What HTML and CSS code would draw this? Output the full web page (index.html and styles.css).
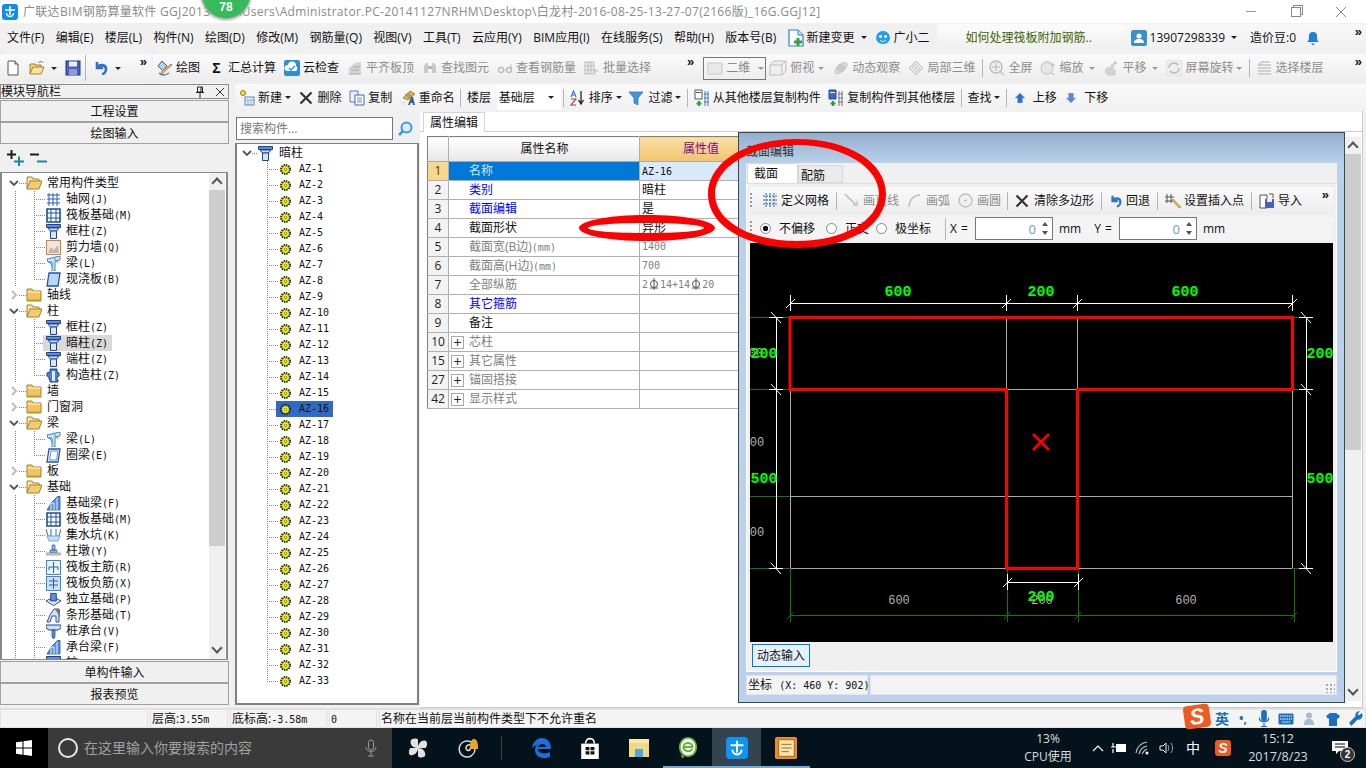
FILE: index.html
```html
<!DOCTYPE html>
<html lang="zh-CN">
<head>
<meta charset="utf-8">
<title>广联达BIM钢筋算量软件</title>
<link rel="stylesheet" href="styles.css">
</head>
<body>
<svg class="defs" width="0" height="0" aria-hidden="true">
  <symbol id="i-app" viewBox="0 0 16 16"><rect width="16" height="16" rx="3" fill="#0e8ef0"/><path d="M8 2v9M3 6h10M4.500 9a3.500 3.500 0 0 0 7 0" fill="none" stroke="#fff" stroke-width="1.500"/></symbol>
  <symbol id="i-new" viewBox="0 0 16 16"><path d="M3 1h7l3 3v11H3z" fill="#fff" stroke="#555"/><path d="M10 1v3h3" fill="#ddd" stroke="#555"/></symbol>
  <symbol id="i-open" viewBox="0 0 16 16"><path d="M1 14V4h5l1 1h5v2" fill="#f3d27a" stroke="#a8802c"/><path d="M1 14l3-7h11l-3 7z" fill="#fbe3a0" stroke="#a8802c"/><path d="M9 3c2-2 4-2 5 0" fill="none" stroke="#3a6fb0"/></symbol>
  <symbol id="i-save" viewBox="0 0 16 16"><rect x="1" y="1" width="14" height="14" fill="#4a62b8" stroke="#23357c"/><rect x="4" y="1.500" width="8" height="5" fill="#e8eefa"/><rect x="4" y="9" width="8" height="6" fill="#8b9bd6"/></symbol>
  <symbol id="i-undo" viewBox="0 0 16 16"><path d="M4 2v6h6M4 8c2-4 9-4 9 1 0 3-2 5-4 5" fill="none" stroke="#2a73d0" stroke-width="2.600"/></symbol>
  <symbol id="i-draw" viewBox="0 0 16 16"><path d="M1 6l4-5 5 5-4 5z" fill="#b6cdec" stroke="#35609c"/><path d="M5 14L15 5l-1-1L4 12z" fill="#e9c55a" stroke="#8a6d20" stroke-width=".7"/><path d="M2 13c3 3 7 2 10 0" fill="none" stroke="#4a7fc4" stroke-width="1.300"/></symbol>
  <symbol id="i-cloud" viewBox="0 0 16 16"><rect width="16" height="16" rx="2" fill="#2b8fdc"/><path d="M3 11a3 3 0 0 1 1-6 4 4 0 0 1 8 1 3 3 0 0 1 0 5z" fill="#fff"/><path d="M5 8l2 2 4-4" fill="none" stroke="#2b8fdc" stroke-width="1.300"/></symbol>
  <symbol id="i-gbox" viewBox="0 0 16 16"><path d="M2 14V8l6-5 6-1v12z" fill="#d4d4d4"/><path d="M2 14h12M4 10h8M6 7h7" stroke="#aaa" fill="none"/></symbol>
  <symbol id="i-gfind" viewBox="0 0 16 16"><path d="M2 13V6l2-3h2v10zM10 13V3h2l2 3v7z" fill="#c8c8c8"/><path d="M6 6h4v3H6z" fill="#b5b5b5"/></symbol>
  <symbol id="i-gglass" viewBox="0 0 16 16"><circle cx="4" cy="10" r="2.500" fill="none" stroke="#bbb" stroke-width="1.300"/><circle cx="12" cy="10" r="2.500" fill="none" stroke="#bbb" stroke-width="1.300"/><path d="M6 10h4M14 10V4" stroke="#bbb"/></symbol>
  <symbol id="i-gselect" viewBox="0 0 16 16"><path d="M1 2h9v12H1zM4 2v12M7 2v12M1 6h9M1 10h9" fill="#eee" stroke="#bbb"/><path d="M9 8l6 3-3 1-1 3z" fill="#ccc"/></symbol>
  <symbol id="i-g2d" viewBox="0 0 16 16"><rect x="1" y="3" width="14" height="11" fill="#e8e8e8" stroke="#c8c8c8"/></symbol>
  <symbol id="i-gcube" viewBox="0 0 18 16"><path d="M1 5h12v10H1zM1 5l4-4h12l-4 4M13 15l4-4V1" fill="#eee" stroke="#bdbdbd"/></symbol>
  <symbol id="i-gorbit" viewBox="0 0 16 16"><ellipse cx="8" cy="8" rx="7.500" ry="3.500" transform="rotate(-40 8 8)" fill="#ddd" stroke="#c4c4c4"/><circle cx="8" cy="8" r="4" fill="#c8c8c8"/></symbol>
  <symbol id="i-g3d" viewBox="0 0 16 16"><path d="M1 8l7-7 7 7-7 7z" fill="#e4e4e4" stroke="#c4c4c4"/><path d="M4 8l4-4M6 10l4-4M8 12l4-4" stroke="#c4c4c4"/></symbol>
  <symbol id="i-gfull" viewBox="0 0 16 16"><circle cx="7" cy="7" r="6" fill="#eee" stroke="#bbb" stroke-width="1.300"/><path d="M7 3v8M3 7h8M11 11l4 4" stroke="#bbb" stroke-width="1.200"/></symbol>
  <symbol id="i-gzoom" viewBox="0 0 16 16"><circle cx="7" cy="8" r="6" fill="#e6e6e6" stroke="#ccc" stroke-width="1.300"/><path d="M13 3v4M11 5h4M11 13l4 2" stroke="#bbb"/></symbol>
  <symbol id="i-gpan" viewBox="0 0 16 16"><path d="M2 11c0-3 4-5 6-4V4h3v5l2 1v3c0 2-2 3-5 3s-6-2-6-5z" fill="#d2d2d2"/><path d="M12 1v4M10 3h4" stroke="#bbb"/></symbol>
  <symbol id="i-grot" viewBox="0 0 16 16"><rect width="16" height="16" fill="#eee" stroke="#ddd"/><path d="M3 8a5 5 0 0 1 9-3M13 8a5 5 0 0 1-9 3" fill="none" stroke="#bbb" stroke-width="1.500"/></symbol>
  <symbol id="i-gfloor" viewBox="0 0 16 16"><path d="M2 5h13M2 8h13M2 11h13M2 14h13M2 5l4-3h8" fill="none" stroke="#c4c4c4" stroke-width="1.300"/></symbol>
  <symbol id="i-newc" viewBox="0 0 16 16"><rect x="6" y="7" width="9" height="8" fill="#e8f0fa" stroke="#5b87c0"/><path d="M6 10h9M9 10v5M12 10v5" stroke="#5b87c0" stroke-width=".6"/><path d="M4 0v3M1 3h6v0M4 6V3" stroke="#a08a10" stroke-width="3"/><path d="M4 1v4M2 3h4" stroke="#f5e05a" stroke-width="1.500"/></symbol>
  <symbol id="i-x" viewBox="0 0 14 14"><path d="M1.500 1.500l11 11M12.500 1.500l-11 11" stroke="#333" stroke-width="2.200" fill="none"/></symbol>
  <symbol id="i-copy" viewBox="0 0 16 16"><path d="M1 1h8v11H1z" fill="#eaf1fb" stroke="#5b7fb5"/><path d="M6 5h9v10H6z" fill="#fff" stroke="#3c68a8"/><path d="M8 8h5M8 10h5M8 12h5" stroke="#6a8fc4"/></symbol>
  <symbol id="i-rename" viewBox="0 0 16 16"><path d="M3 8l7-7 5 3-7 6z" fill="#d9b24a" stroke="#8c6e1e" stroke-width=".7"/><path d="M5 4l5 4M7 3l5 4" stroke="#556" stroke-width=".6"/><path d="M8 15l3-8h2l2 8h-2l-.4-2h-2l-.6 2z" fill="#2e5fb0"/><path d="M1 11h5v4H1z" fill="#e8e8e8"/></symbol>
  <symbol id="i-sort" viewBox="0 0 16 16"><path d="M1 7l2.500-6L6 7M2 5h3" fill="none" stroke="#3b6fc0" stroke-width="1.100"/><path d="M1 9h5L1 15h5" fill="none" stroke="#a83a3a" stroke-width="1.100"/><path d="M11 1v12M8.500 10l2.500 4 2.500-4" fill="none" stroke="#222" stroke-width="1.300"/></symbol>
  <symbol id="i-filter" viewBox="0 0 14 14"><path d="M0 1h14L9 7v7l-4-2V7z" fill="#3f97e0" stroke="#2a6eb0" stroke-width=".7"/></symbol>
  <symbol id="i-cf" viewBox="0 0 16 18"><path d="M1 1h7v9H1z" fill="#fff" stroke="#555"/><path d="M2 3h5v1H2z" fill="#2e5fb0"/><path d="M11 2v15M14 2v15M10 5h5M10 9h5M10 13h5" stroke="#3a7fc4"/><path d="M4 11h3v3h3v-1" fill="none"/><path d="M5 12v5M2.500 14.500h5" stroke="#27a03c" stroke-width="2.200"/></symbol>
  <symbol id="i-ct" viewBox="0 0 16 18"><path d="M1 1h7v9H1z" fill="#3a66c8" stroke="#2a4a9a"/><path d="M2 3h5v1H2z" fill="#fff"/><path d="M11 2v15M14 2v15M10 5h5M10 9h5M10 13h5" stroke="#777"/><path d="M5 12v5M2.500 14.500h5" stroke="#27a03c" stroke-width="2.200"/></symbol>
  <symbol id="i-up" viewBox="0 0 10 10"><path d="M5 0l5 5H7.500v5h-5V5H0z" fill="#2b6fd6" stroke="#8ab4ee" stroke-width=".5"/></symbol>
  <symbol id="i-dn" viewBox="0 0 10 10"><path d="M5 10l5-5H7.500V0h-5v5H0z" fill="#5a86dc" stroke="#9db9ee" stroke-width=".5"/></symbol>
  <symbol id="i-change" viewBox="0 0 16 18"><path d="M1 1h9l5 5v11H1z" fill="#fff" stroke="#2a7fd0" stroke-width="1.200"/><path d="M10 1v5h5" fill="#cfe4fa" stroke="#2a7fd0"/><path d="M10 9v8M6 13h8" stroke="#35a143" stroke-width="3"/></symbol>
  <symbol id="i-face" viewBox="0 0 16 16"><path d="M1 8a7 7 0 1 1 14 0c0 3-3 6-7 6s-7-3-7-6z" fill="#1ea0ec"/><circle cx="5.500" cy="6.500" r="1.400" fill="#fff"/><circle cx="10.500" cy="6.500" r="1.400" fill="#fff"/><path d="M5 10c2 2 4 2 6 0" fill="none" stroke="#fff"/></symbol>
  <symbol id="i-user" viewBox="0 0 16 16"><rect width="16" height="16" rx="2.500" fill="#3d8fc9"/><circle cx="8" cy="6" r="2.500" fill="#fff"/><path d="M3 13c0-3 2-4 5-4s5 1 5 4z" fill="#fff"/></symbol>
  <symbol id="i-bell" viewBox="0 0 14 16"><path d="M1 12c2-1 2-3 2-6a4 4 0 0 1 8 0c0 3 0 5 2 6z" fill="#1e7fe0"/><path d="M5 13.500h4L7 15.500z" fill="#1e7fe0"/></symbol>
  <symbol id="i-pin" viewBox="0 0 10 12"><path d="M2.500 1h5v5h-5zM1 6.500h8M5 7v5M6 1v5" fill="none" stroke="#222"/></symbol>
  <symbol id="i-close" viewBox="0 0 10 10"><path d="M1 1l8 8M9 1l-8 8" stroke="#333" fill="none"/></symbol>
  <symbol id="i-search" viewBox="0 0 16 16"><circle cx="9.500" cy="6.500" r="5" fill="#d9ecfb" stroke="#3d9ae0" stroke-width="2"/><path d="M6 10l-4 4" stroke="#3d9ae0" stroke-width="2.500"/></symbol>
  <symbol id="i-expand" viewBox="0 0 17 16"><path d="M0 4.500h9M4.500 0v9" stroke="#1b1b1b" stroke-width="2"/><path d="M7 11.500h10M12 6.500v9.500" stroke="#178a9a" stroke-width="2"/></symbol>
  <symbol id="i-collapse" viewBox="0 0 17 16"><path d="M0 4.500h9" stroke="#1b1b1b" stroke-width="2"/><path d="M7 11.500h10" stroke="#178a9a" stroke-width="2"/></symbol>
  <symbol id="i-down" viewBox="0 0 10 10"><path d="M1 3l4 4 4-4" fill="none" stroke="#555" stroke-width="1.800"/></symbol>
  <symbol id="i-right" viewBox="0 0 10 10"><path d="M3 1l4 4-4 4" fill="none" stroke="#bbb" stroke-width="1.800"/></symbol>
  <symbol id="i-fopen" viewBox="0 0 16 14"><path d="M1 13V1h5l1 2h6v2" fill="#f6e3a8" stroke="#9c8142"/><path d="M1 13l3-8h12l-3 8z" fill="#f5cd67" stroke="#9c8142"/></symbol>
  <symbol id="i-fclosed" viewBox="0 0 16 14"><path d="M1 13V1h5l1 2h8v10z" fill="#f2c65a" stroke="#9c8142"/><path d="M1.500 4h13" stroke="#fff3c8"/><path d="M2 12h12" stroke="#c48f22"/></symbol>
  <symbol id="i-grid" viewBox="0 0 15 15"><path d="M3 1v13M7 1v13M11 1v13M1 3h13M1 7h13M1 11h13" fill="none" stroke="#2a5cb8"/></symbol>
  <symbol id="i-raft" viewBox="0 0 15 15"><path d="M1 1h13v13H1z" fill="#fff" stroke="#1b4f9c" stroke-width="1.600"/><path d="M5 1v13M10 1v13M1 5h13M1 10h13" stroke="#1b4f9c"/></symbol>
  <symbol id="i-col" viewBox="0 0 15 15"><path d="M.5 .5h14v3H.5z" fill="#5b8fd8" stroke="#1c4290"/><path d="M2 4l2.500 3h6L13 4z" fill="#d4e3f8" stroke="#1c4290"/><path d="M4.500 7h6v7.500h-6z" fill="#d5e6fb" stroke="#1c4290"/></symbol>
  <symbol id="i-wall" viewBox="0 0 15 15"><rect x=".5" y=".5" width="14" height="14" fill="#f7e6d8" stroke="#d0803c"/><path d="M2 13l3-6 3 3 4-5 1 8z" fill="#b8b8b8"/></symbol>
  <symbol id="i-beam" viewBox="0 0 15 15"><path d="M1 3l13-3v4L9 5v10H6V6H2z" fill="#cfe4fa" stroke="#3f86d0"/><path d="M3 5l4 6M8 2l4 5" stroke="#3f86d0"/></symbol>
  <symbol id="i-slab" viewBox="0 0 15 15"><path d="M3 1h11l-2 13H1z" fill="#bcd7f5" stroke="#1e55a8" stroke-width="1.300"/></symbol>
  <symbol id="i-ring" viewBox="0 0 15 15"><path d="M3 1h11l-2 13H1z" fill="#fff" stroke="#1e55a8" stroke-width="1.300"/><path d="M5 3h7l-1.500 9H3.500z" fill="none" stroke="#5b8fd8"/></symbol>
  <symbol id="i-gz" viewBox="0 0 15 15"><path d="M4 1h7v3l2 1v3l-2 1v2l1 1v2H4v-2l-1-1V9L1 8V5l3-1z" fill="#4a80cc" stroke="#1c4290"/><path d="M6 3h3v10H6z" fill="#e0ebfa"/></symbol>
  <symbol id="i-fb" viewBox="0 0 15 15"><path d="M1 14l5-8 6-6h2v14z" fill="#5b8fd8" stroke="#1c4290" stroke-width=".7"/><path d="M5 14V7h3v7M11 14V2" stroke="#e0ebfa" fill="none"/></symbol>
  <symbol id="i-pit" viewBox="0 0 15 15"><path d="M0 1l2 7 3 0V1M10 1v7h3l2-7" fill="none" stroke="#2e6ab8"/><path d="M1 8h13l-2 5H3z" fill="#c6dcf4" stroke="#7aa8dc"/></symbol>
  <symbol id="i-dun" viewBox="0 0 15 15"><path d="M6 1h3v5H6zM4 6h7v3H4z" fill="#8fb4e4" stroke="#2e5fa8" stroke-width=".7"/><path d="M0 9h15v2H0z" fill="#d8d8d8" stroke="#888" stroke-width=".7"/></symbol>
  <symbol id="i-mj" viewBox="0 0 15 15"><rect x=".5" y=".5" width="14" height="14" fill="#e8f2fc" stroke="#3f86d0"/><path d="M7.500 2v11M3 7h9M3 7v3M12 7v3" fill="none" stroke="#2a5cb8"/></symbol>
  <symbol id="i-nj" viewBox="0 0 15 15"><rect x=".5" y=".5" width="14" height="14" fill="#cfe1f5" stroke="#3f86d0"/><path d="M7.500 2v11M3 5h9M3 9h9" fill="none" stroke="#2a5cb8"/></symbol>
  <symbol id="i-dl" viewBox="0 0 16 15"><path d="M0 9l8-4 8 4-8 5z" fill="#e0ebfa" stroke="#1c4290"/><path d="M5 1h6v8H5z" fill="#5b8fd8" stroke="#1c4290"/></symbol>
  <symbol id="i-tx" viewBox="0 0 15 15"><path d="M1 14l3-7 4-6h5v13h-3V8H6l-2 6z" fill="#cfe1f5" stroke="#1c4290" stroke-width=".9"/><path d="M9 1h5v8" fill="#777"/></symbol>
  <symbol id="i-zc" viewBox="0 0 15 15"><path d="M0 1h15v3l-3 2H3L0 4z" fill="#cfe1f5" stroke="#1c4290"/><path d="M6 6h3v7l-1.500 2L6 13z" fill="#5b8fd8" stroke="#1c4290" stroke-width=".7"/></symbol>
  <symbol id="i-gear" viewBox="0 0 12 12"><circle cx="6" cy="6" r="5" fill="none" stroke="#111" stroke-width="2" stroke-dasharray="1.500 1.100"/><circle cx="6" cy="6" r="4.300" fill="#f5ef00" stroke="#222" stroke-width=".6"/><circle cx="6" cy="6" r="1.400" fill="#fff" stroke="#333" stroke-width=".6"/></symbol>
  <symbol id="i-bar" viewBox="0 0 10 12"><circle cx="5" cy="6" r="3.500" fill="none" stroke="#555"/><path d="M5 0v12M1 10h8" stroke="#555"/></symbol>
  <symbol id="i-gridb" viewBox="0 0 15 15"><path d="M3 0v15M7 0v15M11 0v15M0 3h15M0 7h15M0 11h15" fill="none" stroke="#2a5cb8" stroke-dasharray="2 1"/></symbol>
  <symbol id="i-gline" viewBox="0 0 15 15"><path d="M1 1l11 11" stroke="#bbb" stroke-width="1.500"/><path d="M8 13h6V7z" fill="#ccc"/></symbol>
  <symbol id="i-garc" viewBox="0 0 15 15"><path d="M2 14C2 7 7 2 13 2" fill="none" stroke="#c0c0c0" stroke-width="1.500"/></symbol>
  <symbol id="i-gcirc" viewBox="0 0 15 15"><circle cx="7.500" cy="7.500" r="6.500" fill="#f0f0f0" stroke="#bbb" stroke-width="1.300"/><circle cx="7.500" cy="7.500" r="1" fill="#aaa"/></symbol>
  <symbol id="i-ins" viewBox="0 0 16 16"><path d="M2 1v9M6 1v9M0 4h9M0 8h9" fill="none" stroke="#555"/><path d="M7 7l7 8 2-1-8-8z" fill="#e8c84a" stroke="#8a6d20" stroke-width=".6"/></symbol>
  <symbol id="i-imp" viewBox="0 0 16 16"><path d="M1 2h7v13H1z" fill="#fff" stroke="#555"/><rect x="6" y="6" width="9" height="9" fill="#4a62b8"/><rect x="8" y="6" width="5" height="3" fill="#e8eefa"/><path d="M10 1h4v4" fill="none" stroke="#555"/></symbol>
  <symbol id="i-win" viewBox="0 0 16 16"><path d="M0 2.300l6.500-.9v6.200H0zM7.500 1.300L16 0v7.600H7.500zM0 8.500h6.500v6.200L0 13.800zM7.500 8.500H16V16l-8.500-1.200z" fill="#fff"/></symbol>
  <symbol id="i-mic" viewBox="0 0 12 18"><rect x="3.500" y="1" width="5" height="10" rx="2.500" fill="none" stroke="currentColor"/><path d="M1 8c0 6 10 6 10 0M6 13v4M3 17h6" fill="none" stroke="currentColor"/></symbol>
  <symbol id="i-micf" viewBox="0 0 12 18"><rect x="3" y="0" width="6" height="12" rx="3" fill="#1a6fc0"/><path d="M1 8c0 6 10 6 10 0M6 14v3M3 17.500h6" fill="none" stroke="#1a6fc0" stroke-width="1.300"/></symbol>
  <symbol id="i-pinw" viewBox="0 0 22 24"><path d="M11 12C6 12 2 9 3 4c1-3 7-3 8-1zM11 12c0-5 4-9 8-8 3 1 2 7 0 8zM11 12c5 0 8 3 8 8-1 3-7 3-8 1zM11 12c0 5-4 8-8 8-3-1-2-7 0-8z" fill="#e2e2e2"/></symbol>
  <symbol id="i-swirl" viewBox="0 0 22 22"><path d="M15 5a8 8 0 1 0 4 8c0-4-4-6-7-5-2 1-3 4-1 5 2 1 3 0 3-1" fill="none" stroke="#ddd" stroke-width="1.500"/><path d="M14 10c0-6 2-8 4-8s4 2 4 8l1 2h-10z" fill="#e8a818"/></symbol>
  <symbol id="i-edge" viewBox="0 0 22 22"><path d="M2 11C3 4 8 1 12 1c6 0 9 5 9 11H8c0 4 6 6 12 3v5c-7 3-15 0-15-7 0-3 1-5 3-6-2 1-5 3-6 4zm6-1h8c0-4-7-4-8 0z" fill="#1a6fdc"/></symbol>
  <symbol id="i-store" viewBox="0 0 18 20"><path d="M1 6h16v14H1z" fill="#fff"/><path d="M5 6c0-6 8-6 8 0" fill="none" stroke="#fff" stroke-width="1.500"/><path d="M5 9h3.500v3H5zM9.500 9H13v3H9.500zM5 13h3.500v3H5zM9.500 13H13v3H9.500z" fill="#111"/></symbol>
  <symbol id="i-folder" viewBox="0 0 22 20"><path d="M1 1h20v18H1z" fill="#f4d780"/><path d="M1 1h20v4H1z" fill="#f9e9b0"/><path d="M7 11h8v8H7z" fill="#4aa8dc"/></symbol>
  <symbol id="i-ie" viewBox="0 0 20 24"><ellipse cx="10" cy="11" rx="9" ry="10" fill="#fff" stroke="#63b53c" stroke-width="2"/><path d="M5 11h10c0-6-10-6-10 0 0 5 7 6 10 2" fill="none" stroke="#63b53c" stroke-width="2.200"/><path d="M3 20l2 3" stroke="#63b53c" stroke-width="2"/></symbol>
  <symbol id="i-task" viewBox="0 0 24 24"><rect width="24" height="24" rx="4" fill="#0e95f4"/><path d="M12 4v13M5 9h14M7 14a5 5 0 0 0 10 0" fill="none" stroke="#fff" stroke-width="2.200"/></symbol>
  <symbol id="i-note" viewBox="0 0 24 24"><rect width="24" height="24" rx="2" fill="#eb8f1c"/><rect x="4" y="3" width="17" height="18" fill="#fbe6b6" stroke="#a85c10"/><path d="M7 8h11M7 12h11M7 16h8" stroke="#a85c10"/></symbol>
  <symbol id="i-batt" viewBox="0 0 16 12"><rect x="5" y="2" width="10" height="8" fill="#fff"/><path d="M0 5h5M2 1v4M2 7v4" stroke="#fff" stroke-width="1.200"/></symbol>
  <symbol id="i-wifi" viewBox="0 0 16 14"><path d="M1 12C2 6 6 2 12 1M4 13c1-4 3-7 8-8M7 13c1-2 2-4 5-5" fill="none" stroke="#bbb" stroke-width="1.200"/><circle cx="12" cy="12" r="1.500" fill="#fff"/></symbol>
  <symbol id="i-vol" viewBox="0 0 16 14"><path d="M1 5h3l3-3v10L4 9H1z" fill="none" stroke="#eee"/><path d="M9 4c1 2 1 4 0 6M12 2c2 3 2 7 0 10" fill="none" stroke="#aaa"/></symbol>
  <symbol id="i-msg" viewBox="0 0 18 16"><path d="M1 1h16v10H8l-3 3v-3H1z" fill="#fff"/><path d="M4 4h10M4 7h10" stroke="#000"/></symbol>
  <symbol id="i-key" viewBox="0 0 16 12"><rect x=".5" y=".5" width="15" height="11" rx="1" fill="#1a6fc0"/><path d="M2 3h12M2 6h12M4 9h8" stroke="#fff" stroke-dasharray="1.500 .7"/></symbol>
  <symbol id="i-per" viewBox="0 0 16 14"><circle cx="7" cy="3.500" r="3" fill="#a8bcd0"/><path d="M2 13c0-5 2-6 5-6s5 1 5 6z" fill="#a8bcd0"/></symbol>
  <symbol id="i-shirt" viewBox="0 0 14 14"><path d="M4 1h6l4 3-2 3-1-1v8H3V6L2 7 0 4z" fill="#1a6fc0"/></symbol>
  <symbol id="i-wrench" viewBox="0 0 14 14"><path d="M13 2l-3 2-1-1 2-3a4 4 0 0 0-4 5L1 11l2 3 6-6a4 4 0 0 0 4-6z" fill="#1a6fc0"/></symbol>
</svg>

<div class="titlebar">
  <svg class="ic16"><use href="#i-app"/></svg>
  <span class="title">广联达BIM钢筋算量软件 GGJ2013 - [C:\Users\Administrator.PC-20141127NRHM\Desktop\白龙村-2016-08-25-13-27-07(2166版)_16G.GGJ12]</span>
  <div class="winctl">
    <span class="wc-min"></span>
    <span class="wc-max"></span>
    <svg class="wc-close" viewBox="0 0 10 10"><path d="M0 0l10 10M10 0L0 10" stroke="#888" fill="none"/></svg>
  </div>
</div>

<div class="menubar">
  <span>文件(F)</span><span>编辑(E)</span><span>楼层(L)</span><span>构件(N)</span><span>绘图(D)</span><span>修改(M)</span><span>钢筋量(Q)</span><span>视图(V)</span><span>工具(T)</span><span>云应用(Y)</span><span>BIM应用(I)</span><span>在线服务(S)</span><span>帮助(H)</span><span>版本号(B)</span>
  <span class="tool t-chg"><svg class="ic16h"><use href="#i-change"/></svg>新建变更<b class="arrow dk"></b></span>
  <span class="tool"><svg class="ic16"><use href="#i-face"/></svg>广小二</span>
  <span class="hot">如何处理筏板附加钢筋..</span>
  <span class="acct">
    <span class="tool"><svg class="ic16"><use href="#i-user"/></svg>13907298339<b class="arrow dk"></b></span>
    <span>造价豆:0</span>
    <svg class="ic14"><use href="#i-bell"/></svg>
    <span class="more">»</span>
  </span>
</div>

<div class="toolbars">
  <div class="tb tb-a">
    <svg class="ic16"><use href="#i-new"/></svg>
    <svg class="ic16 m2"><use href="#i-open"/></svg><b class="arrow dk"></b>
    <svg class="ic16 m2"><use href="#i-save"/></svg>
    <i class="sep"></i>
    <svg class="ic16"><use href="#i-undo"/></svg><b class="arrow dk"></b>
    <span class="more end">»</span>
  </div>
  <div class="tb tb-b">
    <span class="tool"><svg class="ic16"><use href="#i-draw"/></svg>绘图</span>
    <span class="tool sig"><b class="sigma">Σ</b>汇总计算</span>
    <span class="tool"><svg class="ic16"><use href="#i-cloud"/></svg>云检查</span>
    <span class="tool off"><svg class="ic16"><use href="#i-gbox"/></svg>平齐板顶</span>
    <span class="tool off"><svg class="ic16"><use href="#i-gfind"/></svg>查找图元</span>
    <span class="tool off"><svg class="ic16"><use href="#i-gglass"/></svg>查看钢筋量</span>
    <span class="tool off"><svg class="ic16"><use href="#i-gselect"/></svg>批量选择</span>
    <span class="more m-more">»</span>
    <span class="combo2d"><svg class="ic16"><use href="#i-g2d"/></svg>二维<b class="arrow"></b></span>
    <span class="tool off t-tight"><svg class="ic18"><use href="#i-gcube"/></svg>俯视<b class="arrow"></b></span>
    <span class="tool off"><svg class="ic16"><use href="#i-gorbit"/></svg>动态观察</span>
    <span class="tool off"><svg class="ic16"><use href="#i-g3d"/></svg>局部三维</span>
    <i class="sep"></i>
    <span class="tool off"><svg class="ic16"><use href="#i-gfull"/></svg>全屏</span>
    <span class="tool off"><svg class="ic16"><use href="#i-gzoom"/></svg>缩放<b class="arrow"></b></span>
    <span class="tool off"><svg class="ic16"><use href="#i-gpan"/></svg>平移<b class="arrow"></b></span>
    <span class="tool off"><svg class="ic16"><use href="#i-grot"/></svg>屏幕旋转<b class="arrow a-near"></b></span>
    <i class="sep"></i>
    <span class="tool off"><svg class="ic16"><use href="#i-gfloor"/></svg>选择楼层</span>
    <span class="more end">»</span>
  </div>
</div>

<div class="work">
  <aside class="nav">
    <div class="nav-head"><span>模块导航栏</span><svg class="pin"><use href="#i-pin"/></svg><svg class="cls"><use href="#i-close"/></svg></div>
    <div class="nav-btn">工程设置</div>
    <div class="nav-btn">绘图输入</div>
    <div class="nav-tools"><svg class="ic17"><use href="#i-expand"/></svg><svg class="ic17"><use href="#i-collapse"/></svg></div>
    <div class="nav-tree">
      <div class="tree-rows">
        <div class="row"><svg class="chev"><use href="#i-down"/></svg><i class="hdash"></i><svg class="fold"><use href="#i-fopen"/></svg><span>常用构件类型</span></div>
        <div class="kids">
          <div class="row kid"><i class="dash"></i><svg class="ic15"><use href="#i-grid"/></svg><span>轴网<i class="m">(J)</i></span></div>
          <div class="row kid"><i class="dash"></i><svg class="ic15"><use href="#i-raft"/></svg><span>筏板基础<i class="m">(M)</i></span></div>
          <div class="row kid"><i class="dash"></i><svg class="ic15"><use href="#i-col"/></svg><span>框柱<i class="m">(Z)</i></span></div>
          <div class="row kid"><i class="dash"></i><svg class="ic15"><use href="#i-wall"/></svg><span>剪力墙<i class="m">(Q)</i></span></div>
          <div class="row kid"><i class="dash"></i><svg class="ic15"><use href="#i-beam"/></svg><span>梁<i class="m">(L)</i></span></div>
          <div class="row kid"><i class="dash"></i><svg class="ic15"><use href="#i-slab"/></svg><span>现浇板<i class="m">(B)</i></span></div>
        </div>
        <div class="row"><svg class="chev"><use href="#i-right"/></svg><i class="hdash"></i><svg class="fold"><use href="#i-fclosed"/></svg><span>轴线</span></div>
        <div class="row"><svg class="chev"><use href="#i-down"/></svg><i class="hdash"></i><svg class="fold"><use href="#i-fopen"/></svg><span>柱</span></div>
        <div class="kids">
          <div class="row kid"><i class="dash"></i><svg class="ic15"><use href="#i-col"/></svg><span>框柱<i class="m">(Z)</i></span></div>
          <div class="row kid picked"><i class="dash"></i><svg class="ic15"><use href="#i-col"/></svg><span>暗柱<i class="m">(Z)</i></span></div>
          <div class="row kid"><i class="dash"></i><svg class="ic15"><use href="#i-col"/></svg><span>端柱<i class="m">(Z)</i></span></div>
          <div class="row kid"><i class="dash"></i><svg class="ic15"><use href="#i-gz"/></svg><span>构造柱<i class="m">(Z)</i></span></div>
        </div>
        <div class="row"><svg class="chev"><use href="#i-right"/></svg><i class="hdash"></i><svg class="fold"><use href="#i-fclosed"/></svg><span>墙</span></div>
        <div class="row"><svg class="chev"><use href="#i-right"/></svg><i class="hdash"></i><svg class="fold"><use href="#i-fclosed"/></svg><span>门窗洞</span></div>
        <div class="row"><svg class="chev"><use href="#i-down"/></svg><i class="hdash"></i><svg class="fold"><use href="#i-fopen"/></svg><span>梁</span></div>
        <div class="kids">
          <div class="row kid"><i class="dash"></i><svg class="ic15"><use href="#i-beam"/></svg><span>梁<i class="m">(L)</i></span></div>
          <div class="row kid"><i class="dash"></i><svg class="ic15"><use href="#i-ring"/></svg><span>圈梁<i class="m">(E)</i></span></div>
        </div>
        <div class="row"><svg class="chev"><use href="#i-right"/></svg><i class="hdash"></i><svg class="fold"><use href="#i-fclosed"/></svg><span>板</span></div>
        <div class="row"><svg class="chev"><use href="#i-down"/></svg><i class="hdash"></i><svg class="fold"><use href="#i-fopen"/></svg><span>基础</span></div>
        <div class="kids">
          <div class="row kid"><i class="dash"></i><svg class="ic15"><use href="#i-fb"/></svg><span>基础梁<i class="m">(F)</i></span></div>
          <div class="row kid"><i class="dash"></i><svg class="ic15"><use href="#i-raft"/></svg><span>筏板基础<i class="m">(M)</i></span></div>
          <div class="row kid"><i class="dash"></i><svg class="ic15"><use href="#i-pit"/></svg><span>集水坑<i class="m">(K)</i></span></div>
          <div class="row kid"><i class="dash"></i><svg class="ic15"><use href="#i-dun"/></svg><span>柱墩<i class="m">(Y)</i></span></div>
          <div class="row kid"><i class="dash"></i><svg class="ic15"><use href="#i-mj"/></svg><span>筏板主筋<i class="m">(R)</i></span></div>
          <div class="row kid"><i class="dash"></i><svg class="ic15"><use href="#i-nj"/></svg><span>筏板负筋<i class="m">(X)</i></span></div>
          <div class="row kid"><i class="dash"></i><svg class="ic15"><use href="#i-dl"/></svg><span>独立基础<i class="m">(P)</i></span></div>
          <div class="row kid"><i class="dash"></i><svg class="ic15"><use href="#i-tx"/></svg><span>条形基础<i class="m">(T)</i></span></div>
          <div class="row kid"><i class="dash"></i><svg class="ic15"><use href="#i-zc"/></svg><span>桩承台<i class="m">(V)</i></span></div>
          <div class="row kid"><i class="dash"></i><svg class="ic15"><use href="#i-fb"/></svg><span>承台梁<i class="m">(F)</i></span></div>
          <div class="row kid"><i class="dash"></i><svg class="ic15"><use href="#i-col"/></svg><span>桩<i class="m">(U)</i></span></div>
        </div>
      </div>
      <div class="vscroll nav-scroll"><span class="sb-up"></span><span class="sb-thumb"></span><span class="sb-down"></span></div>
    </div>
    <div class="nav-btn">单构件输入</div>
    <div class="nav-btn">报表预览</div>
  </aside>

  <section class="main">
    <div class="tb tb-c">
      <span class="tool"><svg class="ic16"><use href="#i-newc"/></svg>新建<b class="arrow dk a-near"></b></span>
      <span class="tool"><svg class="ic14"><use href="#i-x"/></svg>删除</span>
      <span class="tool"><svg class="ic16"><use href="#i-copy"/></svg>复制</span>
      <span class="tool"><svg class="ic16"><use href="#i-rename"/></svg>重命名</span>
      <i class="sep"></i>
      <span>楼层</span>
      <span class="floor">基础层<b class="arrow dk"></b></span>
      <i class="sep"></i>
      <span class="tool"><svg class="ic16"><use href="#i-sort"/></svg>排序<b class="arrow dk a-near"></b></span>
      <span class="tool"><svg class="ic14"><use href="#i-filter"/></svg>过滤<b class="arrow dk a-near"></b></span>
      <i class="sep"></i>
      <span class="tool"><svg class="ic16h"><use href="#i-cf"/></svg>从其他楼层复制构件</span>
      <span class="tool"><svg class="ic16h"><use href="#i-ct"/></svg>复制构件到其他楼层</span>
      <i class="sep"></i>
      <span class="tool">查找<b class="arrow dk a-near"></b></span>
      <i class="sep"></i>
      <span class="tool t-move"><svg class="ic10"><use href="#i-up"/></svg>上移</span>
      <span class="tool t-move"><svg class="ic10"><use href="#i-dn"/></svg>下移</span>
    </div>
    <div class="panes">
      <div class="list-pane">
        <div class="searchbar"><span class="search-in">搜索构件...</span><svg class="ic16"><use href="#i-search"/></svg></div>
        <div class="az-tree">
          <div class="row"><svg class="chev"><use href="#i-down"/></svg><i class="hdash"></i><svg class="ic15"><use href="#i-col"/></svg><span class="az-root">暗柱</span></div>
          <div class="az-kids">
            <div class="row kid"><i class="dash"></i><svg class="gear"><use href="#i-gear"/></svg><span class="az">AZ-1</span></div>
            <div class="row kid"><i class="dash"></i><svg class="gear"><use href="#i-gear"/></svg><span class="az">AZ-2</span></div>
            <div class="row kid"><i class="dash"></i><svg class="gear"><use href="#i-gear"/></svg><span class="az">AZ-3</span></div>
            <div class="row kid"><i class="dash"></i><svg class="gear"><use href="#i-gear"/></svg><span class="az">AZ-4</span></div>
            <div class="row kid"><i class="dash"></i><svg class="gear"><use href="#i-gear"/></svg><span class="az">AZ-5</span></div>
            <div class="row kid"><i class="dash"></i><svg class="gear"><use href="#i-gear"/></svg><span class="az">AZ-6</span></div>
            <div class="row kid"><i class="dash"></i><svg class="gear"><use href="#i-gear"/></svg><span class="az">AZ-7</span></div>
            <div class="row kid"><i class="dash"></i><svg class="gear"><use href="#i-gear"/></svg><span class="az">AZ-8</span></div>
            <div class="row kid"><i class="dash"></i><svg class="gear"><use href="#i-gear"/></svg><span class="az">AZ-9</span></div>
            <div class="row kid"><i class="dash"></i><svg class="gear"><use href="#i-gear"/></svg><span class="az">AZ-10</span></div>
            <div class="row kid"><i class="dash"></i><svg class="gear"><use href="#i-gear"/></svg><span class="az">AZ-11</span></div>
            <div class="row kid"><i class="dash"></i><svg class="gear"><use href="#i-gear"/></svg><span class="az">AZ-12</span></div>
            <div class="row kid"><i class="dash"></i><svg class="gear"><use href="#i-gear"/></svg><span class="az">AZ-13</span></div>
            <div class="row kid"><i class="dash"></i><svg class="gear"><use href="#i-gear"/></svg><span class="az">AZ-14</span></div>
            <div class="row kid"><i class="dash"></i><svg class="gear"><use href="#i-gear"/></svg><span class="az">AZ-15</span></div>
            <div class="row kid"><i class="dash"></i><span class="az-sel"><svg class="gear"><use href="#i-gear"/></svg><span class="az">AZ-16</span></span></div>
            <div class="row kid"><i class="dash"></i><svg class="gear"><use href="#i-gear"/></svg><span class="az">AZ-17</span></div>
            <div class="row kid"><i class="dash"></i><svg class="gear"><use href="#i-gear"/></svg><span class="az">AZ-18</span></div>
            <div class="row kid"><i class="dash"></i><svg class="gear"><use href="#i-gear"/></svg><span class="az">AZ-19</span></div>
            <div class="row kid"><i class="dash"></i><svg class="gear"><use href="#i-gear"/></svg><span class="az">AZ-20</span></div>
            <div class="row kid"><i class="dash"></i><svg class="gear"><use href="#i-gear"/></svg><span class="az">AZ-21</span></div>
            <div class="row kid"><i class="dash"></i><svg class="gear"><use href="#i-gear"/></svg><span class="az">AZ-22</span></div>
            <div class="row kid"><i class="dash"></i><svg class="gear"><use href="#i-gear"/></svg><span class="az">AZ-23</span></div>
            <div class="row kid"><i class="dash"></i><svg class="gear"><use href="#i-gear"/></svg><span class="az">AZ-24</span></div>
            <div class="row kid"><i class="dash"></i><svg class="gear"><use href="#i-gear"/></svg><span class="az">AZ-25</span></div>
            <div class="row kid"><i class="dash"></i><svg class="gear"><use href="#i-gear"/></svg><span class="az">AZ-26</span></div>
            <div class="row kid"><i class="dash"></i><svg class="gear"><use href="#i-gear"/></svg><span class="az">AZ-27</span></div>
            <div class="row kid"><i class="dash"></i><svg class="gear"><use href="#i-gear"/></svg><span class="az">AZ-28</span></div>
            <div class="row kid"><i class="dash"></i><svg class="gear"><use href="#i-gear"/></svg><span class="az">AZ-29</span></div>
            <div class="row kid"><i class="dash"></i><svg class="gear"><use href="#i-gear"/></svg><span class="az">AZ-30</span></div>
            <div class="row kid"><i class="dash"></i><svg class="gear"><use href="#i-gear"/></svg><span class="az">AZ-31</span></div>
            <div class="row kid"><i class="dash"></i><svg class="gear"><use href="#i-gear"/></svg><span class="az">AZ-32</span></div>
            <div class="row kid"><i class="dash"></i><svg class="gear"><use href="#i-gear"/></svg><span class="az">AZ-33</span></div>
          </div>
        </div>
      </div>
      <div class="prop-pane">
        <div class="tabstrip"><span class="tab-on">属性编辑</span></div>
        <div class="prop-body">
          <table class="props">
            <colgroup><col class="c-n"><col class="c-k"><col class="c-v"></colgroup>
            <tr class="head"><th></th><th>属性名称</th><th class="hv">属性值</th></tr>
            <tr class="cur"><td class="num">1</td><td class="k"><span class="pl">名称</span></td><td class="v"><span class="mono">AZ-16</span></td></tr>
            <tr><td class="num">2</td><td class="k blue"><span class="pl">类别</span></td><td>暗柱</td></tr>
            <tr><td class="num">3</td><td class="k blue"><span class="pl">截面编辑</span></td><td>是</td></tr>
            <tr><td class="num">4</td><td class="k"><span class="pl">截面形状</span></td><td>异形</td></tr>
            <tr class="dim"><td class="num">5</td><td class="k"><span class="pl">截面宽(B边)<i class="m">(mm)</i></span></td><td class="mono">1400</td></tr>
            <tr class="dim"><td class="num">6</td><td class="k"><span class="pl">截面高(H边)<i class="m">(mm)</i></span></td><td class="mono">700</td></tr>
            <tr class="dim"><td class="num">7</td><td class="k"><span class="pl">全部纵筋</span></td><td class="mono">2<svg class="rebar"><use href="#i-bar"/></svg>14+14<svg class="rebar"><use href="#i-bar"/></svg>20</td></tr>
            <tr><td class="num">8</td><td class="k blue"><span class="pl">其它箍筋</span></td><td></td></tr>
            <tr><td class="num">9</td><td class="k"><span class="pl">备注</span></td><td></td></tr>
            <tr class="dim"><td class="num">10</td><td class="k"><b class="plus">+</b><span>芯柱</span></td><td></td></tr>
            <tr class="dim"><td class="num">15</td><td class="k"><b class="plus">+</b><span>其它属性</span></td><td></td></tr>
            <tr class="dim"><td class="num">27</td><td class="k"><b class="plus">+</b><span>锚固搭接</span></td><td></td></tr>
            <tr class="dim"><td class="num">42</td><td class="k"><b class="plus">+</b><span>显示样式</span></td><td></td></tr>
          </table>
          <div class="vscroll main-scroll"><span class="sb-up"></span><span class="sb-thumb"></span><span class="sb-down"></span></div>
        </div>
      </div>
    </div>
  </section>
</div>

<div class="status">
  <span class="st s1"></span><span class="st s2">层高:<i class="m">3.55m</i></span><span class="st s3">底标高:<i class="m">-3.58m</i></span><span class="st s4"><i class="m">0</i></span><span class="st s5">名称在当前层当前构件类型下不允许重名</span>
  <div class="ime">
    <span class="ime-s">S</span><b class="ime-t">英</b><b class="ime-p">•,</b>
    <svg class="ime-mic"><use href="#i-micf"/></svg><svg class="ime-16"><use href="#i-key"/></svg><svg class="ime-16"><use href="#i-per"/></svg><svg class="ic14"><use href="#i-shirt"/></svg><svg class="ic15"><use href="#i-wrench"/></svg>
  </div>
</div>

<div class="taskbar">
  <div class="start"><svg class="ic16"><use href="#i-win"/></svg></div>
  <div class="cortana"><i class="ring"></i><span class="ph">在这里输入你要搜索的内容</span><svg class="tb-mic"><use href="#i-mic"/></svg></div>
  <div class="apps">
    <span class="app"><svg class="ic22"><use href="#i-pinw"/></svg></span>
    <span class="app"><svg class="ic22"><use href="#i-swirl"/></svg></span>
    <i class="t-sep"></i>
    <span class="app"><svg class="ic22"><use href="#i-edge"/></svg></span>
    <span class="app"><svg class="ic22"><use href="#i-store"/></svg></span>
    <span class="app"><svg class="ic22"><use href="#i-folder"/></svg></span>
    <span class="app run"><svg class="ic22"><use href="#i-ie"/></svg></span>
    <span class="app run on"><svg class="ic22"><use href="#i-task"/></svg></span>
    <span class="app run"><svg class="ic22"><use href="#i-note"/></svg></span>
  </div>
  <div class="tray">
    <div class="cpu"><span>13%</span><span>CPU使用</span></div>
    <svg class="chev-up" viewBox="0 0 12 8"><path d="M1 7l5-5 5 5" fill="none" stroke="#fff" stroke-width="1.200"/></svg>
    <svg class="ic16"><use href="#i-batt"/></svg>
    <svg class="ic16"><use href="#i-wifi"/></svg>
    <svg class="ic16"><use href="#i-vol"/></svg>
    <span class="zh">中</span>
    <span class="tray-s">S</span>
    <div class="clock"><span>15:12</span><span>2017/8/23</span></div>
    <div class="notify"><svg class="ic18"><use href="#i-msg"/></svg><b class="n-badge">2</b></div>
  </div>
</div>

<!-- floating section-editor window -->
<div class="dialog">
  <div class="dlg-title">截面编辑</div>
  <div class="dlg-tabs"><span class="dt on">截面</span><span class="dt">配筋</span></div>
  <div class="dlg-page">
    <div class="dtb">
      <i class="grip"></i>
      <span class="tool"><svg class="ic15"><use href="#i-gridb"/></svg>定义网格</span>
      <i class="sep"></i>
      <span class="tool off"><svg class="ic15"><use href="#i-gline"/></svg>画直线</span>
      <span class="tool off"><svg class="ic15"><use href="#i-garc"/></svg>画弧</span>
      <span class="tool off"><svg class="ic15"><use href="#i-gcirc"/></svg>画圆</span>
      <i class="sep"></i>
      <span class="tool"><svg class="ic14"><use href="#i-x"/></svg>清除多边形</span>
      <i class="sep"></i>
      <span class="tool t-undo"><svg class="ic14"><use href="#i-undo"/></svg>回退</span>
      <i class="sep"></i>
      <span class="tool"><svg class="ic16"><use href="#i-ins"/></svg>设置插入点</span>
      <i class="sep"></i>
      <span class="tool"><svg class="ic16"><use href="#i-imp"/></svg>导入</span>
      <span class="more end">»</span>
    </div>
    <div class="dtb2">
      <i class="grip"></i>
      <span class="rad-item r1"><i class="radio on"></i>不偏移</span>
      <span class="rad-item r2"><i class="radio"></i>正交</span>
      <span class="rad-item r3"><i class="radio"></i>极坐标</span>
      <i class="sep"></i>
      <span class="coord c-eq">X =</span><span class="spin"><span>0</span><i class="spin-btns"><b class="s-up"></b><b class="s-dn"></b></i></span><span class="coord">mm</span>
      <span class="coord c-eq c-y">Y =</span><span class="spin"><span>0</span><i class="spin-btns"><b class="s-up"></b><b class="s-dn"></b></i></span><span class="coord">mm</span>
    </div>
    <svg class="canvas" viewBox="750 243 583 399" width="583" height="399">
      <g fill="none" stroke="#aaa">
        <path d="M790.500 317v251M1006.500 317v251M1077.500 317v251M1292.500 317v251"/>
        <path d="M790 389.500h502M790 496.500h502M790 568.500h502"/>
      </g>
      <g fill="none" stroke="#0a7a0a">
        <path d="M750 317.500h40M750 389.500h40M750 496.500h40M750 568.500h40M1292 317.500h14M1292 389.500h14M1292 568.500h14"/>
        <path d="M790.500 568v54M1007.500 568v54M1078.500 568v54M1294.500 568v54M790 615.500h505"/>
        <path d="M787 619l6-7M1004 619l6-7M1075 619l6-7M1291 619l6-7"/>
      </g>
      <g fill="none" stroke="#fff">
        <path d="M790.500 303.500h502M790.500 295v16M1006.500 295v16M1077.500 295v16M1292.500 295v16"/>
        <path d="M786 308l9-9M1002 308l9-9M1073 308l9-9M1288 308l9-9"/>
        <path d="M776.500 317v251M769 317.500h14M769 389.500h14M769 568.500h14M771 312l10 11M771 384l10 11M771 563l10 11"/>
        <path d="M1306.500 317v251M1299 317.500h14M1299 389.500h14M1299 568.500h14M1301 312l10 11M1301 384l10 11M1301 563l10 11"/>
        <path d="M1007.500 582.500h71M1007.500 574v16M1078.500 574v16M1003 587l9-9M1074 587l9-9"/>
      </g>
      <path d="M790 317.500H1292.500V389.500H1077.500V568.500H1006.500V389.500H790z" fill="none" stroke="#f00" stroke-width="3"/>
      <path d="M1033 434l16 16M1049 434l-16 16" stroke="#f00" stroke-width="2.500"/>
      <g class="dim-g">
        <text x="757" y="446">00</text>
        <text x="757" y="536">00</text>
        <text x="756" y="357">00</text>
        <text x="899" y="604">600</text>
        <text x="1042" y="604">200</text>
        <text x="1186" y="604">600</text>
      </g>
      <g class="dim-m">
        <text x="898" y="296">600</text>
        <text x="1041" y="296">200</text>
        <text x="1185" y="296">600</text>
        <text x="764" y="358">200</text>
        <text x="764" y="483">500</text>
        <text x="1320" y="358">200</text>
        <text x="1320" y="483">500</text>
        <text x="1041" y="601">200</text>
      </g>
    </svg>
    <div class="dyn-row"><span class="dyn">动态输入</span></div>
  </div>
  <div class="dlg-status"><span class="ds1">坐标 <i class="m">(X: 460 Y: 902)</i></span><span class="ds2"><i class="sizer"></i></span></div>
</div>

<!-- green memory badge over title bar -->
<div class="badge">78</div>

<!-- red hand-drawn annotations over the screenshot -->
<svg class="marks" viewBox="0 0 1366 768" width="1366" height="768" aria-hidden="true">
  <path fill-rule="evenodd" fill="#f00" d="M708 194c0-32 38-55 89-55s89 23 89 55-38 54-89 54-89-22-89-54zM715 194c0 27 36 47 82 47s82-20 82-47-36-49-82-49-82 22-82 49z"/>
  <path fill-rule="evenodd" fill="#f00" d="M579 228c0-7 30-13 68-13s68 6 68 13-30 13-68 13-68-6-68-13zM588 228c0 3 26 5 58 5s58-2 58-5-26-5-58-5-58 2-58 5z"/>
</svg>
</body>
</html>
```
FILE: styles.css
```css
* { box-sizing: border-box; }
html, body { margin: 0; padding: 0; }
body {
  position: relative;
  width: 1366px;
  height: 768px;
  overflow: hidden;
  display: flex;
  flex-direction: column;
  background: #f0f0f0;
  color: #111;
  font: 12px/16px "Open Sans", "Noto Sans CJK SC", sans-serif;
}
i, b { font-style: normal; font-weight: normal; }
.defs { position: absolute; }
svg { flex: none; display: block; }
.ic10 { width: 10px; height: 10px; }
.ic14 { width: 14px; height: 14px; }
.ic15 { width: 15px; height: 15px; }
.ic16 { width: 16px; height: 16px; }
.ic16h { width: 16px; height: 18px; }
.ic17 { width: 17px; height: 16px; }
.ic18 { width: 18px; height: 16px; }
.ic22 { width: 22px; height: 22px; }

/* mono latin like the bitmap SimSun digits */
.m, .mono, .az { font-family: "DejaVu Sans Mono", "Noto Sans CJK SC", monospace; font-size: 10px; }

/* title */
.titlebar { flex: none; height: 23px; background: #fff; display: flex; align-items: center; padding-left: 2px; }
.title { margin-left: 5px; color: #8a8a8a; white-space: nowrap; letter-spacing: .31px; }
.winctl { margin-left: auto; display: flex; align-items: center; gap: 35px; padding-right: 20px; }
.wc-min { width: 10px; height: 1px; background: #999; margin-top: 0; }
.wc-max { width: 10px; height: 10px; border: 1px solid #888; box-shadow: 2px -2px 0 -1px #fff, 2px -2px 0 0 #888; }
.wc-close { width: 10px; height: 10px; }

/* menu */
.menubar { flex: none; height: 29px; display: flex; align-items: center; gap: 11.4px; padding: 0 0 0 7px; white-space: nowrap; }
.tool { display: inline-flex; align-items: center; gap: 3px; white-space: nowrap; }
.t-chg { margin-right: -3.4px; }
.arrow { display: inline-block; width: 0; height: 0; border: 3px solid transparent; border-top: 3px solid #999; border-bottom: 0; margin-left: 3px; flex: none; }
.arrow.dk { border-top-color: #222; }
.arrow.a-near { margin-left: 0; }
.hot { flex: none; width: 189px; height: 27px; margin-left: -4.4px; padding-left: 29px; line-height: 27px; color: #3b6400; border-radius: 3px 3px 0 0; background: linear-gradient(#fbfbfb, #efefef); }
.acct { flex: 1; height: 27px; margin-left: -11.4px; padding: 0 0 0 5px; display: flex; align-items: center; gap: 13px; background: linear-gradient(#f8f8f8, #efefef); border-radius: 3px 3px 0 0; }
.acct .ic14 { width: 14px; height: 16px; margin-left: -3px; }
.more { font-size: 13px; line-height: 10px; font-weight: bold; font-family: "Liberation Sans", sans-serif; color: #111; align-self: flex-start; margin-top: 3px; }
.acct .more { margin-left: auto; margin-right: 4px; }
.end { margin-left: auto; margin-right: 4px; }

/* toolbars */
.toolbars { flex: none; height: 32px; padding: 2px 0; display: flex; gap: 2px; }
.tb { height: 28px; display: flex; align-items: center; border-radius: 3px; background: linear-gradient(#fbfbfb, #ececec); }
.sep { flex: none; width: 1px; height: 18px; background: #b5b5b5; }
.tb-a { flex: none; width: 151px; padding-left: 5px; }
.tb-a .m2 { margin-left: 8px; }
.tb-a .arrow { margin-left: 6px; }
.tb-a .sep { height: 26px; margin: 0 7px 0 4px; }
.tb-b { flex: 1; min-width: 0; padding-left: 4px; gap: 8px; }
.tb-b .sep { margin: 0 -2px 0 -1px; }
.off { color: #8d8d8d; }
.sigma { width: 17px; font: bold 14px "Liberation Sans", sans-serif; text-align: center; }
.m-more { margin-left: 28px; margin-right: 1px; }
.combo2d { width: 63px; height: 23px; flex: none; display: flex; align-items: center; gap: 3px; padding-left: 3px; border: 1px solid #777; color: #888; margin-right: -5px; }
.combo2d .arrow { margin-left: 5px; }
.t-tight { margin-right: 1px; }
.t-tight .arrow { margin-left: 1px; }

/* work area */
.work { flex: 1; min-height: 0; display: flex; }
.nav { width: 230px; flex: none; display: flex; flex-direction: column; padding-right: 1px; }
.nav-head { height: 15px; display: flex; align-items: center; border: 1px solid #8c8c8c; line-height: 13px; white-space: nowrap; background: #f0f0f0; }
.pin { width: 10px; height: 12px; margin-left: auto; }
.cls { width: 10px; height: 10px; margin: 0 3px 0 10px; }
.nav-btn { height: 22px; flex: none; line-height: 22px; text-align: center; border: 1px solid #a0a0a0; margin-top: 1px; background: #f0f0f0; font-size: 12px; }
.nav-btn + .nav-btn { margin-top: 0; }
.nav-tools { height: 28px; flex: none; display: flex; align-items: center; gap: 6px; padding-left: 7px; margin-top: 0; }
.nav-tree { flex: none; height: 488px; display: flex; background: #fff; border: 1px solid #888; border-width: 1px 2px 1px 2px; margin: 0 1px 0 0; overflow: hidden; }
.tree-rows { flex: 1; min-width: 0; padding-top: 2px; overflow: hidden; }
.row { height: 16px; display: flex; align-items: center; white-space: nowrap; }
.chev { width: 10px; height: 10px; margin-left: 7px; }
.hdash { width: 7px; height: 1px; margin-right: 0; background: repeating-linear-gradient(to right, #888 0 1px, transparent 1px 2px); }
.fold { width: 16px; height: 14px; margin-right: 5px; }
.kids { margin-left: 13px; padding-left: 19px; background: repeating-linear-gradient(to bottom, #888 0 1px, transparent 1px 2px) 0 0 / 1px 100% no-repeat; }
.dash { flex: none; width: 12px; height: 16px; background-image: repeating-linear-gradient(to bottom, #888 0 1px, transparent 1px 2px), repeating-linear-gradient(to right, #888 0 1px, transparent 1px 2px); background-size: 1px 100%, 100% 1px; background-position: 0 0, 0 8px; background-repeat: no-repeat; }
.kid:last-child > .dash { background-size: 1px 9px, 100% 1px; }
.kid > .ic15 { margin-right: 5px; }
.picked { position: relative; }
.picked > span, .picked > .ic15 { position: relative; }
.picked::before { content: ""; position: absolute; left: 9px; top: 0; width: 69px; height: 16px; background: #d9d9d9; }
.vscroll { flex: none; width: 16px; display: flex; flex-direction: column; background: #f0f0f0; }
.sb-up, .sb-down { flex: none; height: 17px; position: relative; }
.sb-up::after, .sb-down::after { content: ""; position: absolute; left: 4px; top: 6px; width: 6px; height: 6px; border: solid #555; border-width: 2px 0 0 2px; transform: rotate(45deg); }
.sb-down::after { top: 2px; transform: rotate(225deg); }
.sb-thumb { background: #cdcdcd; }
.nav-scroll { margin-right: 1px; }
.nav-scroll .sb-thumb { height: 356px; }
.nav-scroll .sb-down { margin-top: auto; }

/* main */
.main { flex: 1; min-width: 0; margin-left: 5px; display: flex; flex-direction: column; }
.tb-c { flex: none; height: 27px; padding-left: 4px; gap: 7.6px; background: linear-gradient(#fafafa, #f0f0f0); }
.tb-c .ic14 { margin-right: 2px; }
.tb-c .sep { margin: 0 -2px; }
.floor { width: 64px; height: 24px; margin: 0 -3px 0 -2px; padding-left: 2px; display: flex; align-items: center; justify-content: space-between; background: #fff; }
.floor .arrow { margin: 0 7px 0 0; }
.t-move { gap: 8px; margin: 0 0 0 2px; }
.panes { flex: 1; min-height: 0; display: flex; }
.list-pane { width: 184px; flex: none; display: flex; flex-direction: column; padding-bottom: 3px; }
.searchbar { height: 32px; flex: none; padding: 6px 0 3px 1px; display: flex; align-items: center; gap: 4px; background: #f0f0f0; }
.search-in { width: 157px; height: 23px; padding-left: 3px; line-height: 21px; border: 1px solid #777; background: #fff; color: #777; }
.az-tree { flex: 1; min-height: 0; padding-top: 1px; background: #fff; border: 1px solid #808080; border-width: 1px 2px 2px 2px; overflow: hidden; }
.az-tree > .row .chev { margin-left: 5px; }
.az-tree > .row .hdash { width: 6px; }
.az-root { margin-left: 6px; }
.az-kids { margin-left: 30px; }
.gear { width: 11px; height: 11px; margin-left: 1px; }
.az { margin-left: 8px; }
.az-sel { display: flex; align-items: center; margin-left: -3px; height: 16px; width: 57px; background: #316ac5; padding-left: 3px; }
.az-sel .az { color: #111; }
.prop-pane { flex: 1; min-width: 0; margin: 0 3px 0 1px; border-right: 1px solid #ccc; display: flex; flex-direction: column; }
.tabstrip { height: 20px; flex: none; margin-top: 1px; padding-left: 3px; display: flex; background: #fff; border-bottom: 1px solid #ccc; }
.tab-on { width: 62px; text-align: center; line-height: 19px; background: #fff; border: 1px solid #d4d4d4; border-bottom: 0; height: 20px; }
.prop-body { flex: 1; min-height: 0; display: flex; background: #fff; padding: 4px 1px 2px 7px; border-bottom: 1px solid #ccc; justify-content: space-between; }
.props { width: 335px; height: 0; border-collapse: collapse; table-layout: fixed; border-top: 1px solid #808080; border-left: 1px solid #808080; }
.c-n { width: 21px; }
.c-k { width: 191px; }
.props td, .props th { height: 19px; padding: 0 1px 0 2px; border-bottom: 1px solid #b0b0b0; border-right: 1px solid #b0b0b0; font-weight: normal; white-space: nowrap; overflow: hidden; }
.props .head th { height: 25px; text-align: center; background: linear-gradient(#fff, #e6e6e6); border-bottom: 1px solid #aaa; }
.props .head .hv { color: #7c0a82; background: linear-gradient(#f9e0a8, #f2c46c); }
.props .num { text-align: center; padding: 0; background: #f3f3f3; font-size: 12px; color: #222; }
.blue { color: #0000ff; }
.dim { color: #808080; }
.pl { padding-left: 18px; }
.cur .num { background: #f6d88e; color: #5a3a00; }
.cur .k { background: #0078d7; color: #cfe8ff; }
.cur .v { background: #d8eafa; }
.plus { display: inline-block; width: 13px; height: 13px; margin: 0 5px 0 0; line-height: 11px; font-size: 14px; text-align: center; vertical-align: -2px; border: 1px solid #aaa; color: #222; }
.rebar { display: inline-block; width: 10px; height: 12px; margin: 0 1px; vertical-align: -2px; }
.main-scroll { height: 564px; margin-top: 1px; }
.main-scroll .sb-thumb { height: 296px; }
.main-scroll .sb-down { margin-top: auto; }

/* status */
.status { flex: none; height: 20px; display: flex; gap: 2px; position: relative; background: #f0f0f0; border-top: 1px solid #ddd; }
.st { height: 19px; line-height: 18px; background: #f4f4f4; border: 1px solid #e2e2e2; padding-left: 1px; white-space: nowrap; }
.s1 { width: 148px; }
.s2 { width: 78px; }
.s3 { width: 97px; }
.s4 { width: 48px; }
.s5 { flex: 1; }
.ime { position: absolute; right: 0; top: 0; width: 183px; height: 19px; display: flex; align-items: center; gap: 8px; padding-left: 32px; color: #1a6fc0; }
.ime-s { position: absolute; left: 1px; top: -4px; width: 26px; height: 23px; border-radius: 4px; background: #ef5a1e; color: #fff; font: italic bold 22px/23px "Liberation Sans", sans-serif; text-align: center; transform: rotate(-8deg); }
.ime-t { font-weight: bold; font-size: 14px; }
.ime-p { font-weight: bold; margin: 0 3px 0 2px; }
.ime-mic { width: 12px; height: 17px; }
.ime-16 { width: 16px; height: 14px; }

/* taskbar */
.taskbar { flex: none; height: 40px; display: flex; background: #04121c; color: #fff; }
.start { width: 48px; display: flex; align-items: center; justify-content: center; background: #000; }
.cortana { width: 344px; display: flex; align-items: center; background: #3a3a3a; padding-left: 10px; color: #a0a0a0; }
.ring { width: 20px; height: 20px; border: 2px solid #e8e8e8; border-radius: 50%; flex: none; }
.ph { margin-left: 6px; font-size: 14px; }
.tb-mic { width: 12px; height: 18px; margin-left: auto; margin-right: 15px; color: #999; }
.apps { display: flex; align-items: center; padding-left: 1px; }
.app { width: 49px; height: 40px; display: flex; align-items: center; justify-content: center; }
.run { box-shadow: inset 0 -2px 0 #66aee0; }
.on { background: #33434f; }
.t-sep { width: 1px; height: 24px; background: #444; margin: 0 14px 0 10px; }
.tray { flex: 1; display: flex; align-items: center; }
.cpu, .clock { display: flex; flex-direction: column; align-items: center; line-height: 18px; color: #ddd; }
.cpu { width: 80px; margin-left: 198px; }
.chev-up { width: 12px; height: 8px; margin-left: 4px; margin-right: 7px; }
.tray .ic16 { margin-right: 8px; }
.zh { margin-left: 3px; font-size: 14px; }
.tray-s { width: 16px; height: 16px; margin-left: 15px; border-radius: 3px; background: #ef5a1e; color: #fff; font: italic bold 14px/16px "Liberation Sans", sans-serif; text-align: center; }
.clock { width: 62px; margin-left: 16px; font-size: 12.6px; }
.notify { position: relative; margin-left: 22px; width: 24px; }
.n-badge { position: absolute; left: 9px; top: 7px; width: 15px; height: 15px; border-radius: 50%; background: #333; border: 1px solid #ccc; font: bold 10px/13px "Liberation Sans", sans-serif; text-align: center; }

/* dialog window floating over the main pane */
.dialog { position: absolute; left: 738px; top: 132px; width: 607px; height: 571px; display: flex; flex-direction: column; border: 1px solid #3a4650; background: linear-gradient(#94aecd 0, #b9d2ea 30px, #b9d1ea 100%); padding: 0 7px 7px 7px; }
.dlg-title { height: 30px; flex: none; line-height: 38px; color: #333; }
.dlg-tabs { height: 20px; flex: none; display: flex; background: #f0f0f0; padding-left: 1px; align-items: flex-end; }
.dt { width: 45px; height: 18px; padding-left: 2px; line-height: 20px; border: 1px solid #d8d8d8; background: #eaeaea; margin-left: 0; }
.dt.on { width: 51px; height: 20px; padding-left: 6px; background: #fff; border-bottom: 0; line-height: 19px; }
.dlg-page { flex: none; height: 489px; display: flex; flex-direction: column; padding: 3px 3px 0; background: #f0f0f0; border: 1px solid #fff; border-top: 1px solid #ddd; }
.dtb, .dtb2 { flex: none; display: flex; align-items: center; border-radius: 2px; background: linear-gradient(#fafafa, #ececec); white-space: nowrap; }
.dtb { height: 27px; gap: 7px; }
.dtb .ic14 { margin-right: 2px; }
.dtb .t-undo .ic14 { margin-right: 0; }
.dtb .off { margin-right: 1px; }
.dtb .off .ic15 { margin-right: 1px; }
.dtb .off + .sep { margin-left: -2px; }
.dtb2 { height: 23px; margin-top: 3px; background: #f4f4f4; }
.dtb .grip { margin-right: 4px; }
.grip { flex: none; width: 2px; height: 16px; margin-right: 3px; background: repeating-linear-gradient(to bottom, #999 0 2px, transparent 2px 4px); }
.radio { flex: none; width: 11px; height: 11px; border: 1px solid #888; border-radius: 50%; background: #fff; margin-right: 8px; }
.radio.on { background: radial-gradient(circle, #111 0 2.500px, #fff 3px); }
.rad-item { display: flex; align-items: center; }
.r1 { margin: 0 11px 0 5px; }
.r2 { margin-right: 7px; }
.r3 { margin-right: 14px; }
.dtb2 .sep { margin: 0 -2px 0 0; height: 22px; }
.coord { font: 12px/16px "Open Sans", sans-serif; margin: 0 6px; }
.c-eq { word-spacing: 1px; margin-right: 7px; }
.c-y { margin-left: 7px; }
.spin { width: 78px; height: 23px; flex: none; display: flex; justify-content: flex-end; align-items: center; gap: 3px; padding-right: 1px; background: #fff; border: 1px solid #777; color: #6d9bd0; font-size: 13px; }
.spin-btns { display: flex; flex-direction: column; gap: 5px; width: 12px; align-items: center; }
.s-up, .s-dn { width: 0; height: 0; border: 3px solid transparent; }
.s-up { border-bottom: 4px solid #555; border-top: 0; }
.s-dn { border-top: 4px solid #555; border-bottom: 0; }
.canvas { flex: none; margin-top: 3px; background: #000; }
.dim-g text { font: 12px "Liberation Mono", monospace; fill: #b4b4b4; text-anchor: middle; }
.dim-m text { font: bold 15px "Liberation Mono", monospace; fill: #0f0; text-anchor: middle; }
.dyn-row { padding: 2px 0 0 2px; }
.dyn { display: block; width: 58px; height: 23px; line-height: 21px; text-align: center; background: #e5f1fb; border: 1px solid #0078d7; }
.dlg-status { flex: 1; display: flex; gap: 2px; margin-top: 3px; min-height: 0; }
.ds1 { width: 122px; padding-left: 1px; line-height: 18px; background: #f3f3f3; border: 1px solid #e4e4e4; white-space: nowrap; }
.ds1 .m { margin-left: 4px; }
.ds2 { flex: 1; position: relative; background: #f3f3f3; border: 1px solid #e4e4e4; }
.sizer { position: absolute; right: 1px; bottom: 1px; width: 10px; height: 10px; background: radial-gradient(#aaa 1px, transparent 1.500px) 0 0 / 4px 4px; }

/* overlays */
.badge { position: absolute; left: 202px; top: -30px; width: 48px; height: 48px; padding-top: 30px; border-radius: 50%; background: #36bb5a; box-shadow: 0 1px 3px 1px #999; color: #fff; font: bold 12px/14px "Liberation Sans", sans-serif; text-align: center; }
.marks { position: absolute; left: 0; top: 0; pointer-events: none; }
```
